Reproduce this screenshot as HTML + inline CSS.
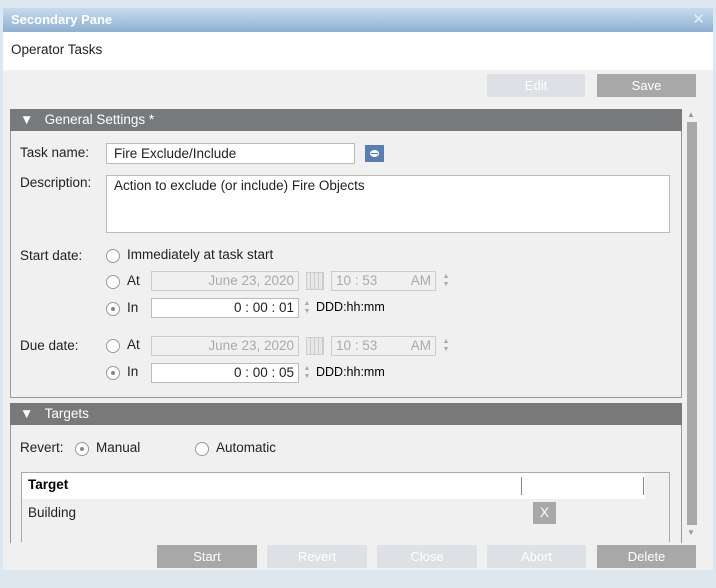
<!DOCTYPE html>
<html><head><style>
body{margin:0;width:716px;height:588px;background:#dde7f0;font-family:"Liberation Sans",sans-serif;font-size:13.5px;color:#222;position:relative;overflow:hidden}
div,span{position:absolute;box-sizing:border-box}
.btn{height:23px;text-align:center;line-height:23px;color:#fff;font-size:13px}
.dk{background:#a8a8a8}.lt{background:#dde1e5}
.hdr{background:#77797b;color:#fff;height:22px;line-height:22px;padding-left:10px}
.in{background:#fff;border:1px solid #bbb}
.dis{background:#f0f0f0;border:1px solid #ccc;color:#aaa;text-align:right;padding-right:4px;line-height:18px}
.r{width:14px;height:14px;border-radius:50%;border:1px solid #999;background:#fff}
.r.on:after{content:"";position:absolute;left:4px;top:4px;width:4px;height:4px;border-radius:50%;background:#888}
.sp{width:10px;height:18px;color:#aaa;font-size:7px;line-height:8px;text-align:center}
.cal{width:18px;height:18px;border:1px solid #ccc;background:repeating-linear-gradient(90deg,#e8e8e8 0 3px,#ccc 3px 4px)}
</style></head><body>
<div style="left:3px;top:8px;width:710px;height:24px;background:linear-gradient(#c6dbee,#8fb0d0);color:#fff;font-weight:bold;line-height:24px;padding-left:8px;font-size:13px">Secondary Pane<span style="right:8px;top:0;color:#e6eef6;font-weight:normal;font-size:15px">✕</span></div>
<div style="left:3px;top:32px;width:710px;height:38px;background:#fff;line-height:36px;padding-left:8px">Operator Tasks</div>
<div style="left:3px;top:70px;width:710px;height:500px;background:#f0f0f0"></div>
<div class="btn lt" style="left:487px;top:74px;width:98px">Edit</div>
<div class="btn dk" style="left:597px;top:74px;width:99px">Save</div>

<div style="left:10px;top:109px;width:672px;height:289px;border:1px solid #999;border-top:none"></div>
<div class="hdr" style="left:10px;top:109px;width:672px">▼&nbsp;&nbsp;&nbsp;General Settings *</div>
<div style="left:20px;top:145px">Task name:</div>
<div class="in" style="left:106px;top:143px;width:249px;height:21px;padding:2px 7px">Fire Exclude/Include</div>
<div style="left:365px;top:145px;width:19px;height:17px;background:#5a7eb0"><span style="left:5px;top:5px;width:9px;height:7px;border-radius:50%;background:#fff"></span><span style="left:6px;top:8px;width:7px;height:1px;background:#5a7eb0"></span></div>
<div style="left:20px;top:175px">Description:</div>
<div class="in" style="left:106px;top:175px;width:564px;height:58px;padding:2px 7px">Action to exclude (or include) Fire Objects</div>

<div style="left:20px;top:248px">Start date:</div>
<div class="r" style="left:106px;top:249px"></div><div style="left:127px;top:247px">Immediately at task start</div>
<div class="r" style="left:106px;top:275px"></div><div style="left:127px;top:273px">At</div>
<div class="dis" style="left:151px;top:271px;width:148px;height:20px">June 23, 2020</div>
<div class="cal" style="left:306px;top:272px"></div>
<div class="dis" style="left:331px;top:271px;width:105px;height:20px;text-align:left;padding-left:4px">10 : 53<span style="right:4px;top:0">AM</span></div>
<div class="sp" style="left:441px;top:273px">▲<br>▼</div>
<div class="r on" style="left:106px;top:302px"></div><div style="left:127px;top:300px">In</div>
<div class="in" style="left:151px;top:298px;width:148px;height:20px;text-align:right;padding-right:4px;line-height:18px">0 : 00 : 01</div>
<div class="sp" style="left:302px;top:300px">▲<br>▼</div>
<div style="left:316px;top:300px;color:#000;font-size:12.5px">DDD:hh:mm</div>

<div style="left:20px;top:338px">Due date:</div>
<div class="r" style="left:106px;top:339px"></div><div style="left:127px;top:337px">At</div>
<div class="dis" style="left:151px;top:336px;width:148px;height:20px">June 23, 2020</div>
<div class="cal" style="left:306px;top:337px"></div>
<div class="dis" style="left:331px;top:336px;width:105px;height:20px;text-align:left;padding-left:4px">10 : 53<span style="right:4px;top:0">AM</span></div>
<div class="sp" style="left:441px;top:338px">▲<br>▼</div>
<div class="r on" style="left:106px;top:366px"></div><div style="left:127px;top:364px">In</div>
<div class="in" style="left:151px;top:363px;width:148px;height:20px;text-align:right;padding-right:4px;line-height:18px">0 : 00 : 05</div>
<div class="sp" style="left:302px;top:365px">▲<br>▼</div>
<div style="left:316px;top:365px;color:#000;font-size:12.5px">DDD:hh:mm</div>

<div style="left:10px;top:403px;width:672px;height:140px;border:1px solid #999;border-top:none;border-bottom:none"></div>
<div class="hdr" style="left:10px;top:403px;width:672px">▼&nbsp;&nbsp;&nbsp;Targets</div>
<div style="left:20px;top:440px">Revert:</div>
<div class="r on" style="left:75px;top:442px"></div><div style="left:96px;top:440px">Manual</div>
<div class="r" style="left:195px;top:442px"></div><div style="left:216px;top:440px">Automatic</div>
<div style="left:21px;top:472px;width:649px;height:70px;border:1px solid #aaa;border-bottom:none"></div>
<div style="left:22px;top:473px;width:623px;height:26px;background:#fff"></div>
<div style="left:28px;top:477px;font-weight:bold;color:#000">Target</div>
<div style="left:521px;top:477px;width:1px;height:18px;background:#888"></div>
<div style="left:643px;top:477px;width:1px;height:18px;background:#888"></div>
<div style="left:28px;top:505px">Building</div>
<div style="left:533px;top:502px;width:23px;height:22px;background:#a8a8a8;color:#fff;text-align:center;line-height:22px">X</div>

<div style="left:687px;top:110px;color:#999;font-size:8px">▲</div>
<div style="left:687px;top:122px;width:10px;height:403px;background:#a8a8a8"></div>
<div style="left:687px;top:528px;color:#999;font-size:8px">▼</div>

<div class="btn dk" style="left:157px;top:545px;width:100px">Start</div>
<div class="btn lt" style="left:267px;top:545px;width:100px">Revert</div>
<div class="btn lt" style="left:377px;top:545px;width:100px">Close</div>
<div class="btn lt" style="left:487px;top:545px;width:99px">Abort</div>
<div class="btn dk" style="left:597px;top:545px;width:99px">Delete</div>
</body></html>
